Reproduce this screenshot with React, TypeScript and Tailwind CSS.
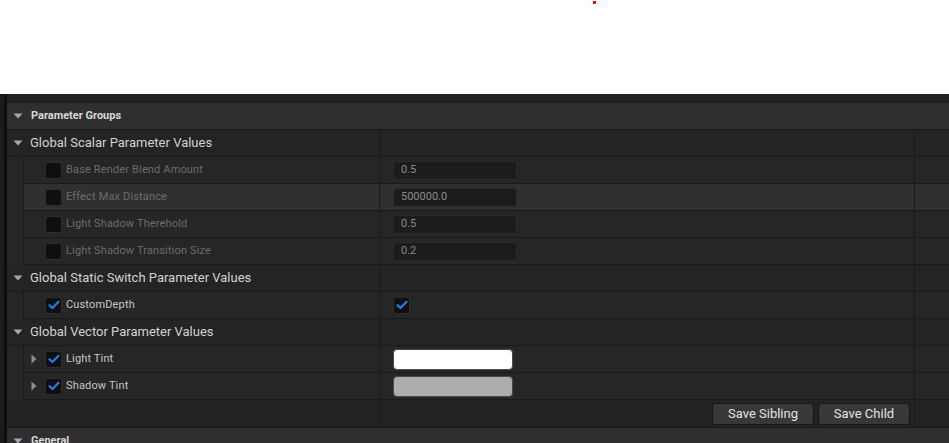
import React from "react";

const font = { fontFamily: "Roboto, 'Liberation Sans', sans-serif" };

function DownTri() {
  return (
    <svg width="10" height="6" viewBox="0 0 10 6" className="shrink-0">
      <path d="M0.5 0.5 L9.5 0.5 L5 5.5 Z" fill="#a8a8a8" />
    </svg>
  );
}

function RightTri() {
  return (
    <svg width="6" height="10" viewBox="0 0 6 10" className="shrink-0">
      <path d="M0.5 0.5 L5.5 5 L0.5 9.5 Z" fill="#8c8c8c" />
    </svg>
  );
}

function Check({ on }: { on: boolean }) {
  return (
    <div className="w-[17px] h-[17px] rounded-[3px] bg-[#0f0f0f] border border-[#2e2e2e] flex items-center justify-center shrink-0">
      {on && (
        <svg width="12" height="10" viewBox="0 0 12 10">
          <path d="M1.5 5.2 L4.5 8 L10.5 1.8" stroke="#1e80e8" strokeWidth="2.2" fill="none" strokeLinecap="round" strokeLinejoin="round" />
        </svg>
      )}
    </div>
  );
}

function Section({ title }: { title: string }) {
  return (
    <div className="h-[27px] flex items-center bg-[#2f2f2f] border-b border-[#1a1a1a] pl-[6px] gap-[8px]">
      <DownTri />
      <span className="text-[11px] font-bold text-[#d8d8d8]">{title}</span>
    </div>
  );
}

function Category({ title }: { title: string }) {
  return (
    <div className="h-[27px] flex bg-[#242424] border-b border-[#1a1a1a]">
      <div className="w-[373px] border-r border-[#1a1a1a] flex items-center pl-[6px] gap-[7px]">
        <DownTri />
        <span className="text-[13px] text-[#d2d2d2]">{title}</span>
      </div>
      <div className="flex-1 border-r border-[#1a1a1a]" />
      <div className="w-[34px]" />
    </div>
  );
}

function ChildRow({
  label,
  checked,
  disabled,
  expand,
  highlight,
  children,
}: {
  label: string;
  checked: boolean;
  disabled?: boolean;
  expand?: boolean;
  highlight?: boolean;
  children?: React.ReactNode;
}) {
  return (
    <div className={`h-[27px] flex border-b border-[#1a1a1a] ${highlight ? "bg-[#303030]" : "bg-[#262626]"}`}>
      <div className="w-[356px] border-r border-[#1a1a1a] flex items-center">
        <div className="w-[21px] pl-[7px] flex items-center">{expand && <RightTri />}</div>
        <Check on={checked} />
        <span className={`ml-[4px] text-[11px] tracking-[0.15px] ${disabled ? "text-[#6c6c6c]" : "text-[#c6c6c6]"}`}>{label}</span>
      </div>
      <div className="flex-1 border-r border-[#1a1a1a] flex items-center pl-[13px]">{children}</div>
      <div className="w-[34px]" />
    </div>
  );
}

function NumInput({ value }: { value: string }) {
  return (
    <div className="w-[124px] h-[19px] rounded-[3px] bg-[#1c1c1c] border border-[#2b2b2b] flex items-center pl-[7px] text-[11px] text-[#8a8a8a]">
      {value}
    </div>
  );
}

function Swatch({ color }: { color: string }) {
  return <div className="w-[120px] h-[21px] rounded-[4px] border border-[#4a4a4a]" style={{ backgroundColor: color }} />;
}

function Group({ children }: { children: React.ReactNode }) {
  return (
    <div className="flex">
      <div className="w-[17px] bg-[#262626] border-r border-[#1a1a1a]" />
      <div className="flex-1 flex flex-col">{children}</div>
    </div>
  );
}

export default function App() {
  return (
    <div className="w-[949px] h-[443px] overflow-hidden bg-white flex flex-col" style={font}>
      <div className="h-[94px] relative shrink-0">
        <div className="absolute left-[593px] top-[1px] w-[3px] h-[3px] bg-[#e81010]" />
      </div>
      <div className="flex-1 flex bg-[#1e1e1e]">
        <div className="w-[4px] bg-[#1c1c1c]" />
        <div className="w-[3px] bg-[#0e0e0e]" />
        <div className="flex-1 flex flex-col">
          <div className="h-[9px] bg-[#202020]" />
          <Section title="Parameter Groups" />
          <Category title="Global Scalar Parameter Values" />
          <Group>
            <ChildRow label="Base Render Blend Amount" checked={false} disabled>
              <NumInput value="0.5" />
            </ChildRow>
            <ChildRow label="Effect Max Distance" checked={false} disabled highlight>
              <NumInput value="500000.0" />
            </ChildRow>
            <ChildRow label="Light Shadow Therehold" checked={false} disabled>
              <NumInput value="0.5" />
            </ChildRow>
            <ChildRow label="Light Shadow Transition Size" checked={false} disabled>
              <NumInput value="0.2" />
            </ChildRow>
          </Group>
          <Category title="Global Static Switch Parameter Values" />
          <Group>
            <ChildRow label="CustomDepth" checked>
              <Check on />
            </ChildRow>
          </Group>
          <Category title="Global Vector Parameter Values" />
          <Group>
            <ChildRow label="Light Tint" checked expand>
              <Swatch color="#ffffff" />
            </ChildRow>
            <ChildRow label="Shadow Tint" checked expand>
              <Swatch color="#adadad" />
            </ChildRow>
          </Group>
          <div className="h-[28px] flex bg-[#232323] border-b border-[#1a1a1a]">
            <div className="w-[373px] border-r border-[#1a1a1a]" />
            <div className="flex-1 border-r border-[#1a1a1a] flex items-center justify-end pr-[4px] gap-[4px]">
              <button className="h-[22px] w-[102px] rounded-[3px] bg-[#383838] border border-[#161616] text-[13px] text-[#e2e2e2]">
                Save Sibling
              </button>
              <button className="h-[22px] w-[92px] rounded-[3px] bg-[#383838] border border-[#161616] text-[13px] text-[#e2e2e2]">
                Save Child
              </button>
            </div>
            <div className="w-[34px]" />
          </div>
          <Section title="General" />
        </div>
      </div>
    </div>
  );
}
